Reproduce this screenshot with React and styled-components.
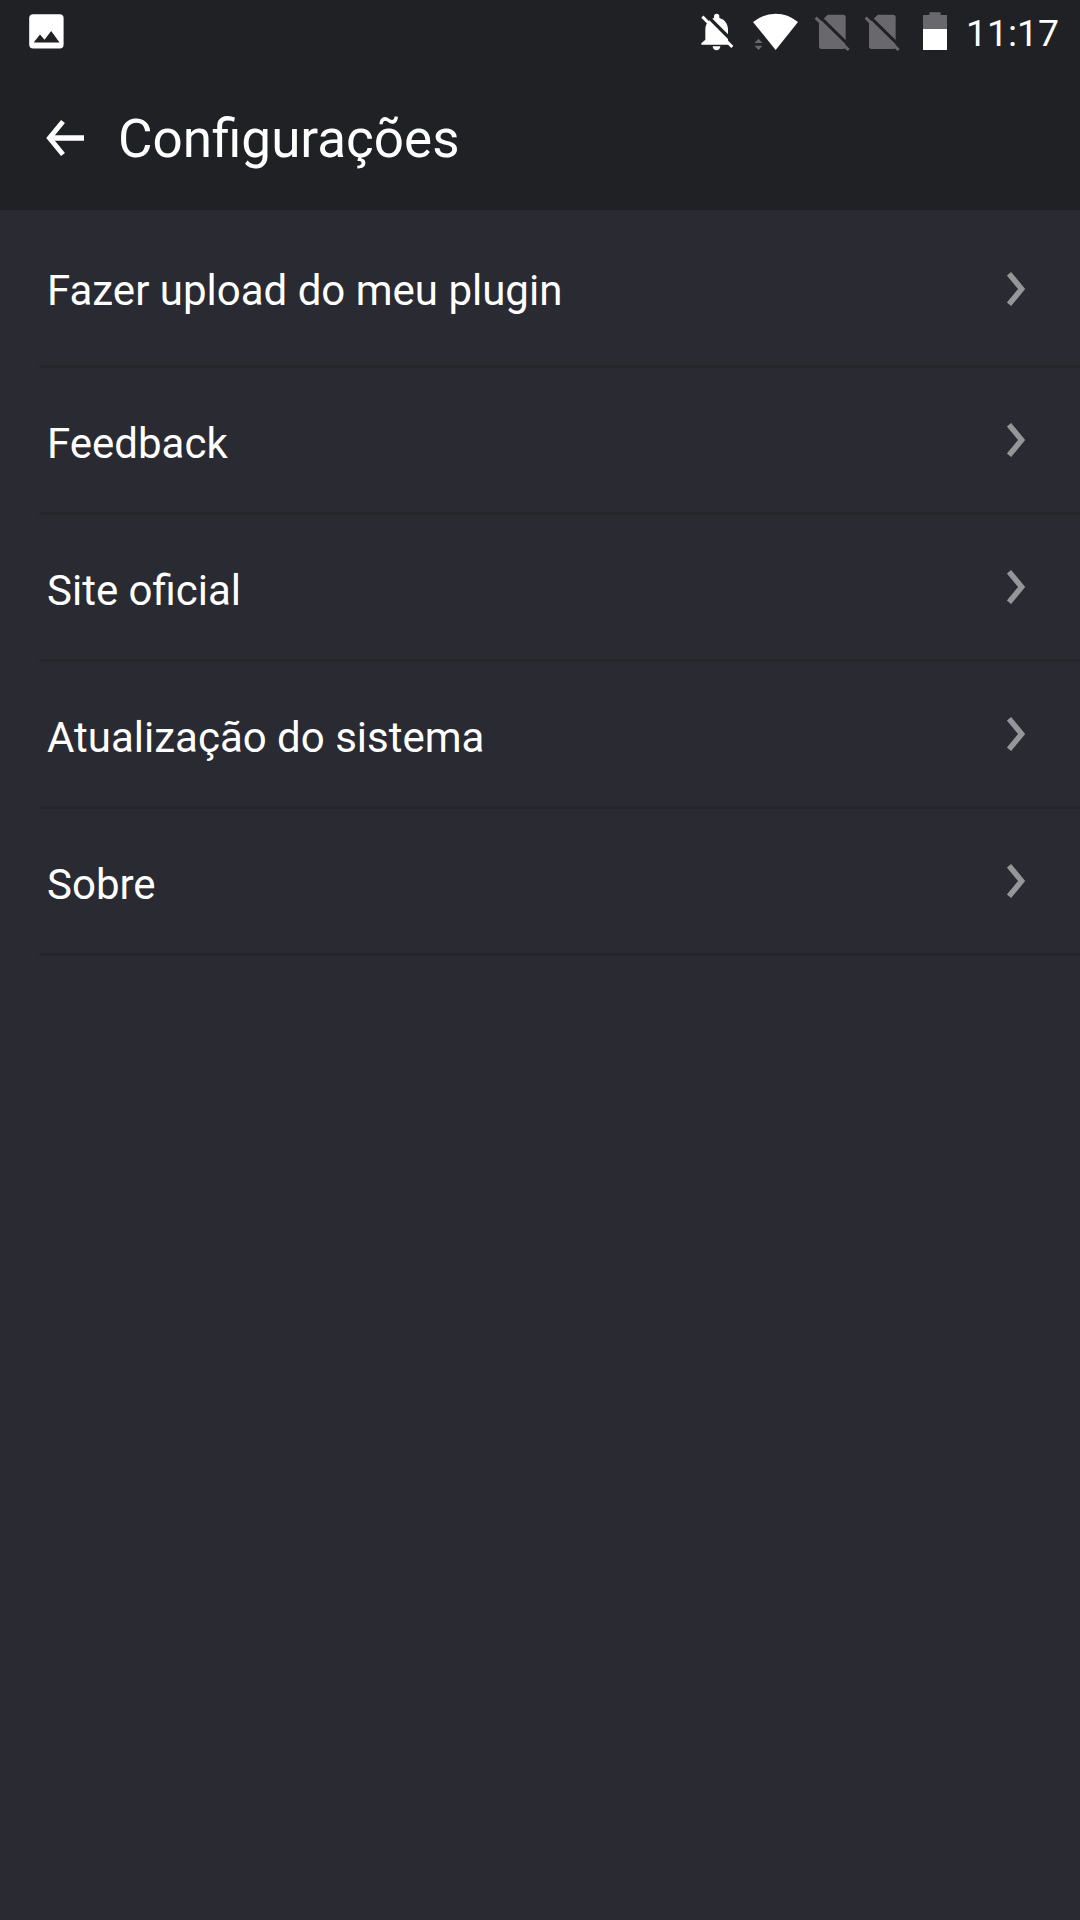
import React from "react";
import styled, { createGlobalStyle } from "styled-components";

const GlobalStyle = createGlobalStyle`
    * {
        box-sizing: border-box;
    }

    body {
        margin: 0;
        background: #2a2a32;
        color: #fff;
        font-family: Roboto, "Liberation Sans", sans-serif;
    }
`;

const Screen = styled.div`
    width: 1080px;
    height: 1920px;
    background: #2a2a32;
    overflow: hidden;
`;

const StatusBar = styled.div`
    height: 64px;
    display: flex;
    background: #202125;
`;

const StatusIcon = styled.svg`
    display: block;
    flex: none;
    width: ${({ $width }) => $width}px;
    height: 64px;
    margin-left: ${({ $gap }) => $gap || 0}px;
`;

const StatusRight = styled.div`
    display: flex;
    margin-left: auto;
`;

const Clock = styled.span`
    width: 114px;
    margin-left: 18px;
    padding-top: 1px;
    font-size: 37.300px;
    line-height: 64px;
    white-space: nowrap;
`;

const Header = styled.header`
    height: 146px;
    padding-left: 45px;
    display: flex;
    align-items: center;
    background: #202125;
`;

const BackButton = styled.button`
    display: flex;
    width: 42px;
    height: 42px;
    padding: 0;
    margin-top: 2px;
    border: 0;
    background: none;
`;

const Title = styled.h1`
    margin: 3px 0 0 31px;
    font-size: 53px;
    line-height: 64px;
    font-weight: 400;
`;

const List = styled.ul`
    margin: 0;
    padding: 0 0 0 39px;
    list-style: none;
`;

const Row = styled.li`
    height: ${({ $first }) => ($first ? 158 : 147)}px;
    padding: ${({ $first }) => ($first ? 2 : 0)}px 54px 0 8px;
    display: flex;
    align-items: center;
    justify-content: space-between;
    border-bottom: 3px solid #25262a;
`;

const Label = styled.span`
    padding-top: ${({ $first }) => ($first ? 5 : 7)}px;
    font-size: 42px;
    line-height: 50px;
`;

const Chevron = styled.svg`
    display: block;
    width: 20px;
    height: 36px;
`;

const rows = [
    { id: 1, text: "Fazer upload do meu plugin" },
    { id: 2, text: "Feedback" },
    { id: 3, text: "Site oficial" },
    { id: 4, text: "Atualização do sistema" },
    { id: 5, text: "Sobre" },
];

const PictureIcon = () => (
    <StatusIcon $width={36} $gap={28} viewBox="28 0 36 64">
        <rect x="29.2" y="14.2" width="34.4" height="34.4" rx="4" fill="#fff" />
        <path d="M33.7 42.5L40 34.4l4.5 5.4L51.2 31l8.3 11.5z" fill="#202125" />
    </StatusIcon>
);

const BellOffIcon = () => (
    <StatusIcon $width={34} viewBox="60 0 102 192">
        <path
            d="M64 134v-4l12-11V88c0-16 10-30 26-34v-5a8 8 0 0 1 16 0v5c16 4 26 18 26 34v46z"
            fill="#fff"
        />
        <path d="M98 139h23c0 7-5 12-11.500 12S98 146 98 139z" fill="#fff" />
        <path d="M72 38l94 94" stroke="#202125" strokeWidth="10" />
        <path d="M67 50l90 91" stroke="#fff" strokeWidth="9" />
    </StatusIcon>
);

const WifiIcon = () => (
    <StatusIcon $width={47} $gap={18} viewBox="216 0 141 192">
        <path d="M219 66Q250 41 287 41T354 66L287 150z" fill="#fff" />
        <path d="M235.500 116l12 13h-24zM223.500 137h24l-12 13z" fill="#69696d" />
    </StatusIcon>
);

const NoSimIcon = ({ gap }) => (
    <StatusIcon $width={36} $gap={gap} viewBox="402 0 108 192">
        <path
            d="M443 44h46q8 0 8 8v87q0 8-8 8h-64q-8 0-8-8V70z"
            fill="#69686d"
        />
        <path d="M413 44l100 98" stroke="#202125" strokeWidth="9" />
        <path d="M407 53l99 97" stroke="#69686d" strokeWidth="9" />
    </StatusIcon>
);

const BatteryIcon = () => (
    <StatusIcon $width={26} $gap={22} viewBox="126 0 78 192">
        <path d="M148 37h34v8h19v42h-72V45h19z" fill="#69686d" />
        <path d="M129 87h72v63h-72z" fill="#fff" />
    </StatusIcon>
);

const App = () => {
    return (
        <>
            <GlobalStyle />
            <Screen>
                <StatusBar>
                    <PictureIcon />
                    <StatusRight>
                        <BellOffIcon />
                        <WifiIcon />
                        <NoSimIcon gap={15} />
                        <NoSimIcon gap={14} />
                        <BatteryIcon />
                        <Clock>11:17</Clock>
                    </StatusRight>
                </StatusBar>
                <Header>
                    <BackButton aria-label="Voltar">
                        <svg width="42" height="42" viewBox="0 0 42 42" fill="none" stroke="#fff">
                            <path d="M4 21h35" strokeWidth="5.500" />
                            <path d="M18 4.500L4.500 21L18 37.500" strokeWidth="5" />
                        </svg>
                    </BackButton>
                    <Title>Configurações</Title>
                </Header>
                <List>
                    {rows.map((row, index) => (
                        <Row key={row.id} $first={index === 0}>
                            <Label $first={index === 0}>{row.text}</Label>
                            <Chevron viewBox="0 0 20 36" fill="none" stroke="#96969a" strokeWidth="5.500">
                                <path d="M3 2.700L15.600 18L3 33.300" />
                            </Chevron>
                        </Row>
                    ))}
                </List>
            </Screen>
        </>
    );
};

export default App;
